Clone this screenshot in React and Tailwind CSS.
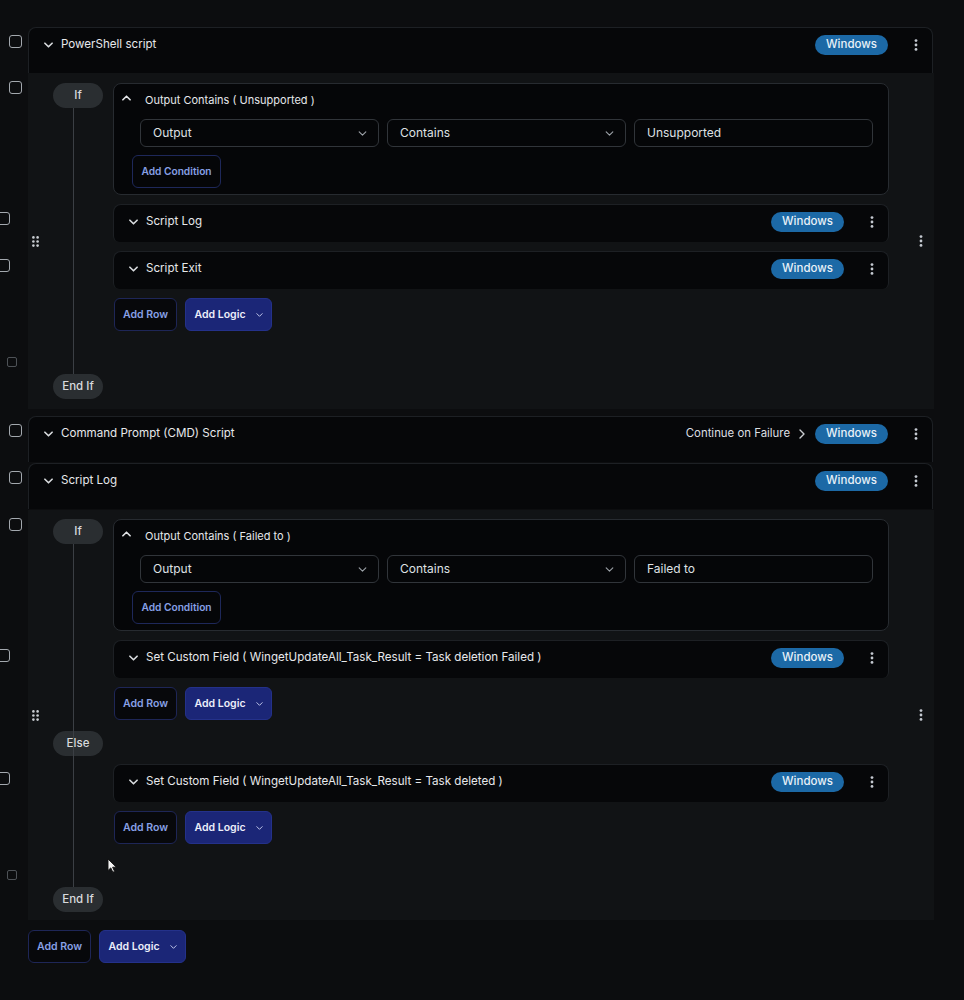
import React from "react";

function Checkbox({ className = "", dim = false }) {
  return (
    <span
      className={`absolute block ${
        dim
          ? "h-[10px] w-[10px] rounded-[2px] border-[1.5px] border-[#4e5257]"
          : "h-[13px] w-[13px] rounded-[3px] border-[1.5px] border-[#a3a8ae]"
      } ${className}`}
    />
  );
}

function ChevronDown({ className = "", stroke = "#d9dcdf", w = 9, h = 6, sw = 1.8 }) {
  return (
    <svg className={className} width={w} height={h} viewBox="0 0 10 6" fill="none">
      <path d="M1 1l4 4 4-4" stroke={stroke} strokeWidth={sw} strokeLinecap="round" strokeLinejoin="round" />
    </svg>
  );
}

function ChevronUp({ className = "" }) {
  return (
    <svg className={className} width="9" height="6" viewBox="0 0 10 6" fill="none">
      <path d="M1 5l4-4 4 4" stroke="#e2e4e7" strokeWidth="1.8" strokeLinecap="round" strokeLinejoin="round" />
    </svg>
  );
}

function ChevronRight() {
  return (
    <svg width="6" height="10" viewBox="0 0 6 10" fill="none">
      <path d="M1 1l4 4-4 4" stroke="#c9ccd0" strokeWidth="1.4" strokeLinecap="round" strokeLinejoin="round" />
    </svg>
  );
}

function Dots() {
  return (
    <div className="flex w-[16px] justify-center">
      <svg width="4" height="12" viewBox="0 0 4 12" fill="#c4c9d0">
        <circle cx="2" cy="1.6" r="1.4" />
        <circle cx="2" cy="6" r="1.4" />
        <circle cx="2" cy="10.4" r="1.4" />
      </svg>
    </div>
  );
}

function Grip() {
  return (
    <svg width="7" height="11" viewBox="0 0 7 11" fill="#c9cdd2">
      <circle cx="1.4" cy="1.4" r="1.3" />
      <circle cx="5.6" cy="1.4" r="1.3" />
      <circle cx="1.4" cy="5.5" r="1.3" />
      <circle cx="5.6" cy="5.5" r="1.3" />
      <circle cx="1.4" cy="9.6" r="1.3" />
      <circle cx="5.6" cy="9.6" r="1.3" />
    </svg>
  );
}

function Badge() {
  return (
    <span className="flex h-[20px] items-center rounded-full bg-[#1c69a6] px-[11px] text-[11.5px] font-medium text-[#e9f1f8]">
      Windows
    </span>
  );
}

function StepCard({ title, extra, top = false, children }) {
  return (
    <div
      className={`relative rounded-t-lg border-x border-t border-[#1d2024] bg-[#060709] ${
        top ? "h-[46px] w-[905px]" : "h-[38px] w-[776px] rounded-b-md"
      }`}
    >
      {children}
      <div className="flex h-[34px] items-center pl-[15px] pr-[8px]">
        <ChevronDown className="shrink-0" />
        <span className="ml-[8px] flex-1 truncate text-[11.6px] text-[#e6e8eb]">{title}</span>
        {extra}
        <Badge />
        <div className="ml-[20px]">
          <Dots />
        </div>
      </div>
    </div>
  );
}

function Select({ label }) {
  return (
    <div className="flex h-[28px] items-center justify-between rounded-md border border-[#31353a] bg-[#050608] pl-[12px] pr-[11px] text-[12px] text-[#dfe1e4]">
      <span>{label}</span>
      <ChevronDown stroke="#9ea3a9" w={9} h={5} sw={1.3} />
    </div>
  );
}

function ConditionCard({ title, value }) {
  return (
    <div className="w-[776px] rounded-lg border border-[#272b30] bg-[#050608] pb-[6px] pt-[8px]">
      <div className="flex h-[17px] items-center pl-[8px]">
        <ChevronUp className="-mt-[6px]" />
        <span className="ml-[14px] text-[11px] text-[#e6e8eb]">{title}</span>
      </div>
      <div className="ml-[26px] mt-[10px] grid w-[733px] grid-cols-3 gap-[8px]">
        <Select label="Output" />
        <Select label="Contains" />
        <div className="flex h-[28px] items-center rounded-md border border-[#31353a] bg-[#050608] px-[12px] text-[12px] text-[#dfe1e4]">
          {value}
        </div>
      </div>
      <button className="ml-[18px] mt-[8px] h-[33px] w-[89px] rounded-md border border-[#1e285a] bg-[#050608] text-[10.2px] font-semibold text-[#87a0e6]">
        Add Condition
      </button>
    </div>
  );
}

function Buttons({ className = "" }) {
  return (
    <div className={`flex gap-[8px] ${className}`}>
      <button className="h-[33px] w-[63px] rounded-md border border-[#1e2657] bg-[#07080b] text-[10.5px] font-semibold text-[#87a0e6]">
        Add Row
      </button>
      <button className="flex h-[33px] w-[87px] items-center justify-center gap-[10px] rounded-md border border-[#24318a] bg-[#1b2677] text-[10.5px] font-semibold text-[#eceefa]">
        Add Logic
        <ChevronDown stroke="#c9cff0" w={7} h={4} sw={1.4} />
      </button>
    </div>
  );
}

function Pill({ label }) {
  return (
    <div className="ml-[11px] flex h-[25px] w-[50px] items-center justify-center rounded-full bg-[#2a2e31] text-[11.5px] font-medium text-[#d8dadd]">
      {label}
    </div>
  );
}

function Panel({ children, pt, pb, lineTop, lineBottom }) {
  return (
    <div className="relative flex w-[906px] bg-[#111315]">
      <Checkbox className="-left-[19px] top-[8px]" />
      <div className="flex w-[14px] items-center justify-center">
        <Grip />
      </div>
      <div className={`relative flex flex-1 flex-col ${pt} ${pb}`}>
        <div className={`absolute left-[31px] z-10 w-px bg-[#3b3f44] ${lineTop} ${lineBottom}`} />
        {children}
      </div>
      <div className="flex w-[45px] items-center justify-end pr-[5px]">
        <Dots />
      </div>
    </div>
  );
}

function Row({ pill, children, className = "" }) {
  return (
    <div className={`relative flex ${className}`}>
      <div className="w-[71px] shrink-0">{pill && <Pill label={pill} />}</div>
      {children && <div className="flex flex-col gap-[9px]">{children}</div>}
    </div>
  );
}

function EndIf({ className = "" }) {
  return (
    <div className={`relative flex ${className}`}>
      <Checkbox dim className="-left-[35px] -top-[17px]" />
      <Pill label="End If" />
    </div>
  );
}

export default function App() {
  return (
    <div className="relative min-h-[1000px] bg-[#0c0d0f] pl-[28px] pt-[27px] font-['Inter','Noto_Sans',sans-serif]">
      <StepCard top title="PowerShell script">
        <Checkbox className="-left-[20px] top-[7px]" />
      </StepCard>

      <Panel pt="pt-[10px]" pb="pb-[10px]" lineTop="top-[35px]" lineBottom="bottom-[35px]">
        <Row pill="If">
          <ConditionCard title="Output Contains ( Unsupported )" value="Unsupported" />
          <StepCard title="Script Log">
            <Checkbox className="-left-[117px] top-[7px]" />
          </StepCard>
          <StepCard title="Script Exit">
            <Checkbox className="-left-[117px] top-[7px]" />
          </StepCard>
          <Buttons className="ml-[1px]" />
        </Row>
        <EndIf className="mt-[43px]" />
      </Panel>

      <div className="mt-[7px]">
        <StepCard
          top
          title="Command Prompt (CMD) Script"
          extra={
            <span className="mr-[10px] flex items-center gap-[9px] text-[11.4px] text-[#dcdfe3]">
              Continue on Failure
              <ChevronRight />
            </span>
          }
        >
          <Checkbox className="-left-[20px] top-[7px]" />
        </StepCard>
      </div>

      <div className="mt-[1px]">
        <StepCard top title="Script Log">
          <Checkbox className="-left-[20px] top-[7px]" />
        </StepCard>
      </div>

      <div className="mt-[1px]">
        <Panel pt="pt-[9px]" pb="pb-[8px]" lineTop="top-[34px]" lineBottom="bottom-[33px]">
          <Row pill="If">
            <ConditionCard title="Output Contains ( Failed to )" value="Failed to" />
            <StepCard title="Set Custom Field ( WingetUpdateAll_Task_Result = Task deletion Failed )">
              <Checkbox className="-left-[117px] top-[8px]" />
            </StepCard>
            <Buttons className="ml-[1px]" />
          </Row>
          <Row pill="Else" className="mt-[11px]" />
          <Row className="mt-[8px]">
            <StepCard title="Set Custom Field ( WingetUpdateAll_Task_Result = Task deleted )">
              <Checkbox className="-left-[117px] top-[7px]" />
            </StepCard>
            <Buttons className="ml-[1px]" />
          </Row>
          <EndIf className="mt-[43px]" />
        </Panel>
      </div>

      <Buttons className="mt-[10px]" />

      <svg className="absolute left-[107px] top-[858px]" width="10" height="15" viewBox="0 0 10 15">
        <path d="M1 1v11.5l2.8-2.6 2 4.3 1.8-.8-2-4.2H9.3z" fill="#f4f4f4" stroke="#111" strokeWidth="0.9" strokeLinejoin="round" />
      </svg>
    </div>
  );
}
